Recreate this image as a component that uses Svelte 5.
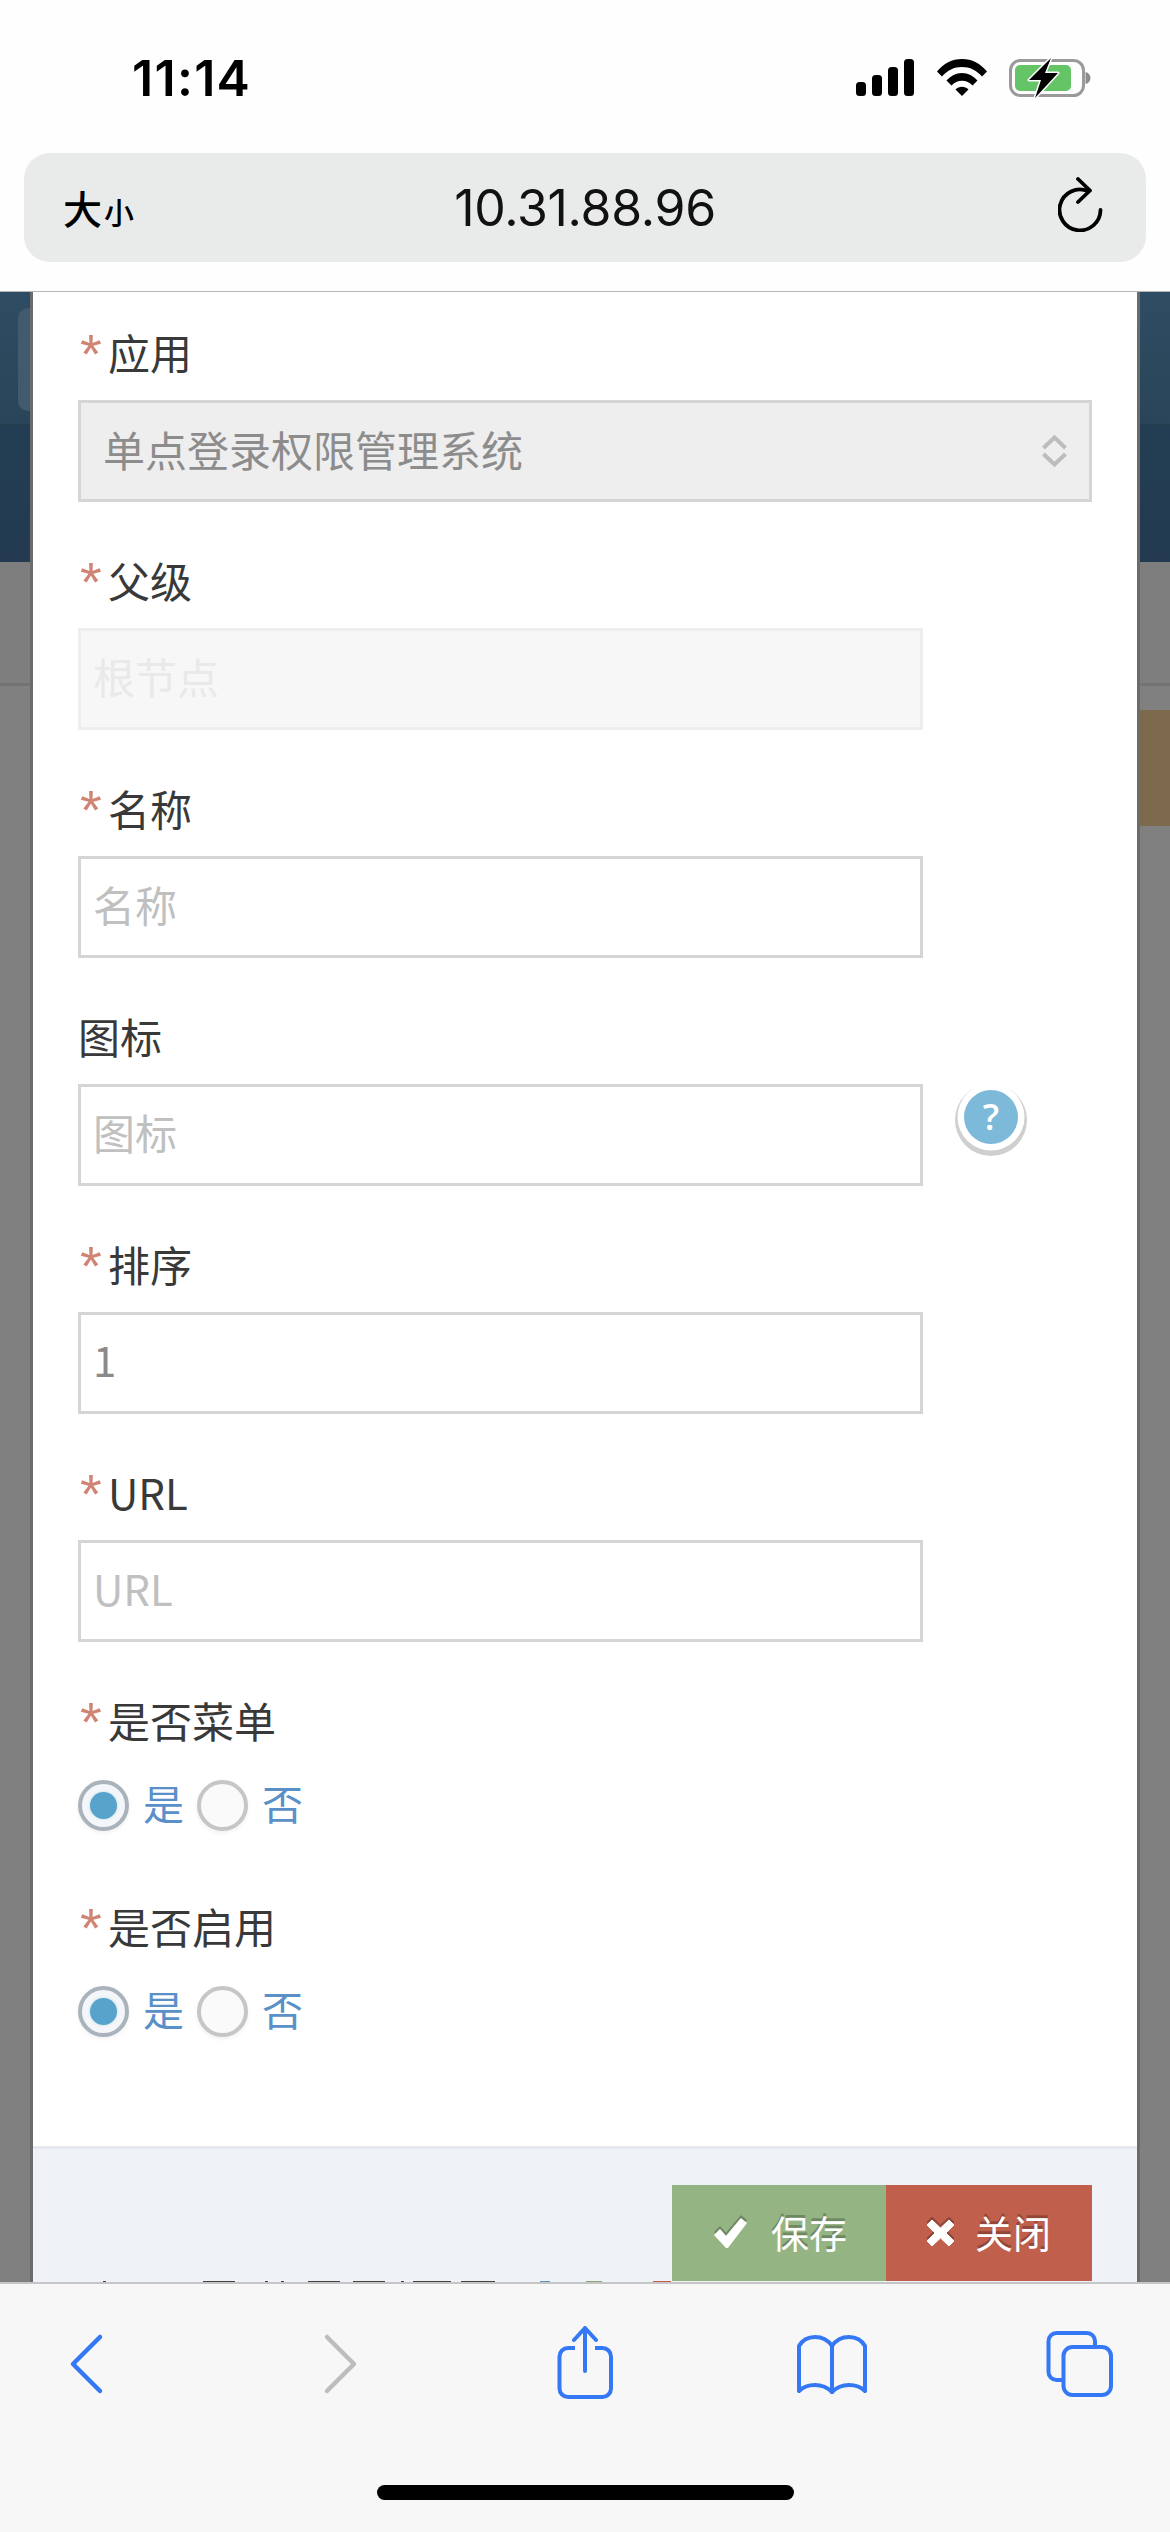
<script>
  const fields = [
    { label: '应用', req: true, kind: 'select', value: '单点登录权限管理系统' },
    { label: '父级', req: true, kind: 'disabled', placeholder: '根节点' },
    { label: '名称', req: true, kind: 'input', placeholder: '名称' },
    { label: '图标', req: false, kind: 'input', placeholder: '图标', help: true },
    { label: '排序', req: true, kind: 'input', value: '1' },
    { label: 'URL', req: true, kind: 'input', placeholder: 'URL' }
  ];
  const radios = ['是否菜单', '是否启用'];
</script>

<div class="page">
  <header class="top">
    <div class="status">
      <span class="time">11:14</span>
      <div class="status-icons">
        <svg class="signal" width="58" height="37" viewBox="0 0 58 37" fill="#000">
          <rect x="0" y="23" width="10" height="14" rx="3.5"/>
          <rect x="16" y="16" width="10" height="21" rx="3.5"/>
          <rect x="32" y="8" width="10" height="29" rx="3.5"/>
          <rect x="48" y="0" width="10" height="37" rx="3.5"/>
        </svg>
        <svg class="wifi" width="50" height="37" viewBox="0 0 50 37" fill="#000">
          <path d="M0 12.5C6.5 4.500 15 0 25 0s18.500 4.500 25 12.500l-5 5C39.500 11.300 33 8 25 8S10.500 11.300 5 17.500z"/>
          <path d="M9.500 21.500C13.500 17 19 14 25 14s11.500 3 15.500 7.500l-5 5C32.800 23.500 29 21.800 25 21.800s-7.800 1.700-10.500 4.700z"/>
          <path d="M18.500 30.500c1.800-1.800 4-2.800 6.500-2.800s4.700 1 6.500 2.800L25 37z"/>
        </svg>
        <svg class="battery" width="82" height="40" viewBox="0 0 82 40">
          <rect x="1.500" y="2.500" width="73" height="35" rx="10" fill="none" stroke="#9a9a9a" stroke-width="3"/>
          <rect x="6" y="7" width="56" height="26" rx="5" fill="#65c466"/>
          <path d="M76.500 14c3 .8 5 3 5 6s-2 5.200-5 6z" fill="#8c8c8c"/>
          <path d="M42 0 20 22h12l-6 18 23-25H36z" fill="#000" stroke="#fff" stroke-width="3" paint-order="stroke" stroke-linejoin="round"/>
        </svg>
      </div>
    </div>
    <div class="address">
      <span class="aa"><b>大</b><small>小</small></span>
      <span class="url">10.31.88.96</span>
      <svg class="reload" width="46" height="55" viewBox="0 0 46 55" fill="none" stroke="#000" stroke-width="3.800" stroke-linecap="round" stroke-linejoin="round">
        <path d="M42.500 33A20.500 20.500 0 1 1 30 14"/>
        <path d="M20 2l12 11.500L20 25"/>
      </svg>
    </div>
  </header>

  <main class="stage">
    <div class="backdrop" aria-hidden="true">
      <div class="band-nav"><span class="nav-pill"></span></div>
      <div class="band-nav2"></div>
      <div class="band-gray"></div>
      <div class="band-rest"><span class="alert-strip"></span></div>
    </div>

    <section class="modal">
      <form class="form">
        {#each fields as f}
          <div class="field">
            <div class="label">{#if f.req}<i>*</i>{/if}{f.label}</div>
            {#if f.kind === 'select'}
              <div class="select">
                <span>{f.value}</span>
                <svg width="27" height="32" viewBox="0 0 27 32" fill="none" stroke="#bcbcbc" stroke-width="4">
                  <path d="M2.500 13 13.500 2.500 24.500 13M2.500 19l11 10.500L24.500 19"/>
                </svg>
              </div>
            {:else}
              <div class="input-row">
                <input class="input" class:off={f.kind === 'disabled'} class:val={!!f.value} value={f.value ?? ''} placeholder={f.placeholder ?? ''} readonly />
                {#if f.help}<span class="help">?</span>{/if}
              </div>
            {/if}
          </div>
        {/each}
        {#each radios as r}
          <div class="field radio-field">
            <div class="label"><i>*</i>{r}</div>
            <div class="radios">
              <span class="radio on"></span><span class="rlabel">是</span>
              <span class="radio"></span><span class="rlabel">否</span>
            </div>
          </div>
        {/each}
      </form>
      <footer class="foot">
        <div class="btn green">
          <svg width="34" height="30" viewBox="0 0 34 30"><path d="M2 17 7 12l6 7L28 1l5 4-19 25z" fill="#fff" stroke="#fff" stroke-width="1.500" stroke-linejoin="round"/></svg>
          <span>保存</span>
        </div>
        <div class="btn red">
          <svg width="29" height="28" viewBox="0 0 29 28"><path d="M6 1 14.500 9 23 1l5 5-8 8 8 8-5 5-8.500-8L6 27l-5-5 8-8-8-8z" fill="#fff" stroke="#fff" stroke-linejoin="round"/></svg>
          <span>关闭</span>
        </div>
        <svg class="peek" width="1104" height="1" viewBox="0 0 1104 1" aria-hidden="true">
          <path d="M70 .5h3M170 .5h32M232 .5h3M248 .5h3M275 .5h32M320 .5h32M368 .5h3M380 .5h38M428 .5h34" stroke="#444"/>
          <path d="M507 .5h10" stroke="#5a90c8"/>
          <path d="M553 .5h16" stroke="#87a96b"/>
          <path d="M620 .5h18" stroke="#c15f4d"/>
        </svg>
      </footer>
    </section>
  </main>

  <nav class="toolbar">
    <svg class="tool-icons" width="1170" height="90" viewBox="0 0 1170 90" fill="none" stroke="#3478f6" stroke-width="4" stroke-linecap="round" stroke-linejoin="round">
      <path d="M100 12 73 39l0 0 27 27" stroke-width="4.500" transform="translate(0 -1)"/>
      <path d="M327 12l27 27-27 27" stroke="#bdbdbd" stroke-width="4.500" transform="translate(0 -1)"/>
      <path d="M575 22h-7a8.500 8.500 0 0 0-8.500 8.500v32a8.500 8.500 0 0 0 8.500 8.500h34.500a8.500 8.500 0 0 0 8.500-8.500v-32a8.500 8.500 0 0 0-8.500-8.500H595" stroke-linecap="butt"/>
      <path d="M585 45V2M574 14 585 2l11 12"/>
      <path d="M799 64V20C803 13 810 11 815 11C822 11 828 14 832 20C836 14 842 11 849 11C854 11 861 13 865 20V64"/>
      <path d="M799 65C804 60 810 59 815 59C822 59 828 62 832 66C836 62 842 59 849 59C854 59 860 60 865 65"/>
      <path d="M832 20V66"/>
      <path d="M1095 20v-5a8 8 0 0 0-8-8h-30.500a8 8 0 0 0-8 8v31a8 8 0 0 0 8 8h6.500"/>
      <rect x="1063.500" y="21" width="47.500" height="48" rx="9"/>
    </svg>
    <div class="home"></div>
  </nav>
</div>

<style>
  :global(body) { margin: 0; background: #fff; }
  .page {
    width: 1170px;
    height: 2532px;
    overflow: hidden;
    display: flex;
    flex-direction: column;
    font-family: "Noto Sans CJK SC", "Noto Sans", sans-serif;
  }

  .top { height: 291px; flex: none; background: #fefefe; border-bottom: 1px solid #b4b4b4; position: relative; z-index: 2; }
  .status { height: 153px; display: flex; justify-content: space-between; align-items: flex-start; box-sizing: border-box; padding: 0 79px 0 132px; }
  .time { font: 600 50px/1 Inter, "Liberation Sans", sans-serif; letter-spacing: 1.3px; margin-top: 53px; color: #000; }
  .status-icons { display: flex; align-items: flex-start; margin-top: 58px; }
  .signal { margin-top: 1px; }
  .wifi { margin: 1px 0 0 23px; }
  .battery { margin-left: 22px; }

  .address {
    margin: 0 24px;
    height: 109px;
    border-radius: 26px;
    background: #e9eaea;
    display: grid;
    grid-template-columns: 1fr auto 1fr;
    align-items: center;
    padding: 0 44px;
  }
  .aa { display: flex; align-items: baseline; color: #000; margin-left: -5px; }
  .aa b { font-size: 39px; font-weight: 500; line-height: 1; }
  .aa small { font-size: 30px; font-weight: 500; margin-left: 2px; line-height: 1; }
  .url { font: 400 50px/1 Inter, "Liberation Sans", sans-serif; color: #111; letter-spacing: -.3px; }
  .reload { justify-self: end; margin: -6px -2px 0 0; }

  .stage { position: relative; height: 1990px; flex: none; background: #808080; }
  .backdrop { display: flex; flex-direction: column; height: 100%; }
  .band-nav { height: 135px; box-sizing: border-box; background: linear-gradient(#2e4c63, #2a4559); border-bottom: 3px solid #233c50; padding: 16px 0 0 18px; }
  .nav-pill { display: block; width: 40px; height: 103px; border-radius: 10px; background: #415a6e; }
  .band-nav2 { height: 135px; background: linear-gradient(#233e54, #233a50); }
  .band-gray { height: 124px; box-sizing: border-box; background: #7e7e7e; border-bottom: 3px solid #737373; }
  .band-rest { flex: 1; background: #808080; padding-top: 24px; }
  .alert-strip { display: block; height: 116px; margin-left: 1100px; background: #7d6a4d; }

  .modal {
    position: absolute;
    top: 0; left: 33px;
    width: 1104px;
    height: 100%;
    background: #fff;
    box-shadow: 0 0 0 3px #6b6b6b;
    display: flex;
    flex-direction: column;
  }
  .form { flex: 1; padding: 33px 45px 0; }
  .field { margin-bottom: 51px; }
  .label { height: 60px; margin-bottom: 15px; font-size: 42px; line-height: 54px; color: #393939; white-space: nowrap; }
  .label i { font-style: normal; color: #cf8474; font-size: 56px; line-height: 58px; font-family: "Liberation Sans", sans-serif; margin: 0 8px 0 2px; display: inline-block; width: 20px; height: 54px; vertical-align: top; overflow: visible; }
  .select {
    height: 102px;
    box-sizing: border-box;
    border: 3px solid #d5d5d5;
    background: #eee;
    display: flex;
    align-items: center;
    justify-content: space-between;
    padding: 0 21px 6px 22px;
    color: #8c8c8c;
    font-size: 42px;
  }
  .select svg { margin-top: 6px; }
  .input-row { display: flex; align-items: flex-start; }
  .input {
    width: 845px;
    height: 102px;
    box-sizing: border-box;
    border: 3px solid #d5d5d5;
    border-radius: 0;
    background: #fff;
    padding: 0 12px 7px;
    font: 400 42px "Noto Sans CJK SC", "Noto Sans", sans-serif;
    color: #8a8a8a;
    outline: none;
    margin: 0;
  }
  .input.val { padding-bottom: 10px; }
  .input::placeholder { color: #c0c0c0; opacity: 1; }
  .input.off { background: #f7f7f7; border-color: #eee; }
  .input.off::placeholder { color: #e9e9e9; }
  .help {
    width: 54px; height: 54px;
    border-radius: 50%;
    background: #7db9d8;
    box-shadow: 0 0 0 6.500px #fff, 0 3px 0 9px #cfcfcf;
    margin: 6px 0 0 41px;
    display: grid;
    place-items: center;
    color: #fff;
    font: 600 36px/1 "Open Sans", sans-serif;
  }
  .radio-field { margin-bottom: 0; }
  .radio-field + .radio-field { margin-top: 68px; }
  .radio-field .label { margin-bottom: 27px; }
  .radios { display: flex; align-items: center; height: 51px; font-size: 41px; }
  .radio { width: 51px; height: 51px; box-sizing: border-box; border: 4px solid #c6c6c6; border-radius: 50%; background: #fafafa; box-shadow: 0 2px 4px rgba(0,0,0,.06); display: grid; place-items: center; }
  .radio.on { border-color: #aab3bc; background: #f4f6f9; }
  .radio.on::after { content: ""; width: 27px; height: 27px; border-radius: 50%; background: #57a3cb; box-shadow: 0 0 3px #b7d8ea; }
  .rlabel { color: #5a90c8; margin: 0 13px 6px 14px; line-height: 51px; }

  .foot {
    position: relative;
    flex: none;
    height: 136px;
    box-sizing: border-box;
    border-top: 3px solid #e4e8ee;
    background: #eff3f8;
    padding: 36px 45px 0;
    display: flex;
    justify-content: flex-end;
  }
  .btn { height: 96px; display: flex; align-items: center; gap: 24px; color: #fff; font-size: 38px; text-shadow: 0 -3px 0 rgba(0,0,0,.25); }
  .btn span { margin-bottom: 3px; }
  .btn.green { width: 214px; background: #94b484; padding-left: 41px; box-sizing: border-box; }
  .btn.red { width: 206px; background: #c15f4d; padding-left: 40px; box-sizing: border-box; gap: 20px; }
  .btn svg { filter: drop-shadow(0 -3px 0 rgba(0,0,0,.25)); }
  .peek { position: absolute; left: 0; bottom: 0; }

  .toolbar { flex: 1; position: relative; z-index: 2; background: #f7f7f7; border-top: 2px solid #c6c6c6; display: flex; flex-direction: column; }
  .tool-icons { margin-top: 42px; flex: none; }
  .home { width: 417px; height: 15px; border-radius: 8px; background: #000; margin: 69px auto 0; }
</style>
